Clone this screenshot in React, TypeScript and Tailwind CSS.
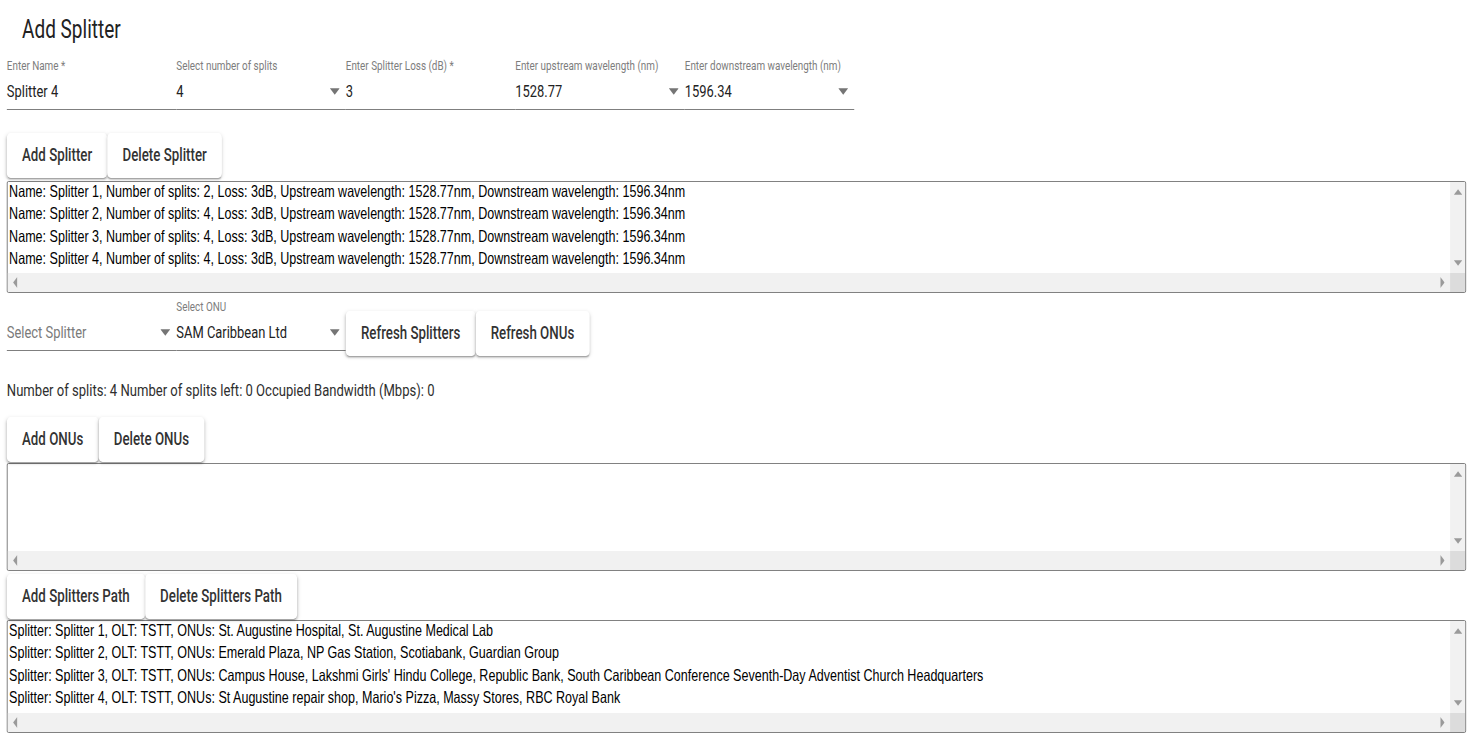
import React from "react";

const roboto = "font-['Roboto',sans-serif]";

const splitterLines = [
  "Name: Splitter 1, Number of splits: 2, Loss: 3dB, Upstream wavelength: 1528.77nm, Downstream wavelength: 1596.34nm",
  "Name: Splitter 2, Number of splits: 4, Loss: 3dB, Upstream wavelength: 1528.77nm, Downstream wavelength: 1596.34nm",
  "Name: Splitter 3, Number of splits: 4, Loss: 3dB, Upstream wavelength: 1528.77nm, Downstream wavelength: 1596.34nm",
  "Name: Splitter 4, Number of splits: 4, Loss: 3dB, Upstream wavelength: 1528.77nm, Downstream wavelength: 1596.34nm",
];

const pathLines = [
  "Splitter: Splitter 1, OLT: TSTT, ONUs: St. Augustine Hospital, St. Augustine Medical Lab",
  "Splitter: Splitter 2, OLT: TSTT, ONUs: Emerald Plaza, NP Gas Station, Scotiabank, Guardian Group",
  "Splitter: Splitter 3, OLT: TSTT, ONUs: Campus House, Lakshmi Girls' Hindu College, Republic Bank, South Caribbean Conference Seventh-Day Adventist Church Headquarters",
  "Splitter: Splitter 4, OLT: TSTT, ONUs: St Augustine repair shop, Mario's Pizza, Massy Stores, RBC Royal Bank",
];

const DropArrow = () => (
  <svg width="13" height="7" viewBox="0 0 10 5" className="shrink-0">
    <path d="M0 0l5 5 5-5z" fill="#757575" />
  </svg>
);

type FieldProps = {
  label?: string;
  value?: string;
  placeholder?: string;
  select?: boolean;
};

const Field = ({ label, value, placeholder, select }: FieldProps) => (
  <div className="flex w-[223px] shrink-0 flex-col">
    <div className="h-[16px] text-[13px] leading-[16px] text-[#7d7d7d]">
      {label}
    </div>
    <div className="flex h-[36px] items-center justify-between border-b border-[#7f7f7f] pr-[8px]">
      {value ? (
        <span className="text-[17px] text-[#222]">{value}</span>
      ) : (
        <span className="text-[17px] text-[#7a7a7a]">{placeholder}</span>
      )}
      {select && <DropArrow />}
    </div>
  </div>
);

const Btn = ({ children }: { children: React.ReactNode }) => (
  <button className="h-[45px] shrink-0 rounded-[5px] bg-white px-5 text-[17.5px] font-medium text-[#333] shadow-[0_3px_1px_-2px_rgba(0,0,0,0.2),0_2px_2px_0_rgba(0,0,0,0.14),0_1px_5px_0_rgba(0,0,0,0.12)]">
    {children}
  </button>
);

const Tri = ({ dir }: { dir: "up" | "down" | "left" | "right" }) => {
  const d = {
    up: "M0 5L5 0L10 5z",
    down: "M0 0L10 0L5 5z",
    left: "M5 0L5 10L0 5z",
    right: "M0 0L5 5L0 10z",
  }[dir];
  const vertical = dir === "up" || dir === "down";
  return (
    <svg
      width={vertical ? 11 : 6}
      height={vertical ? 6 : 11}
      viewBox={vertical ? "0 0 10 5" : "0 0 5 10"}
    >
      <path d={d} fill="#9a9a9a" />
    </svg>
  );
};

const TextBox = ({ lines, height }: { lines: string[]; height: string }) => (
  <div
    className={`flex w-full flex-col overflow-hidden rounded-[2px] border border-[#707070] ${height}`}
  >
    <div className="flex min-h-0 flex-1">
      <div className="min-w-0 flex-1 overflow-hidden whitespace-pre pl-[2px] font-['Liberation_Sans',Arial,sans-serif] text-[16.5px] leading-[22.4px] text-black">
        <div className="-mt-[2px]">
          {lines.map((l, i) => (
            <div key={i}>{l}</div>
          ))}
        </div>
      </div>
      <div className="flex w-[20px] flex-col items-center justify-between bg-[#f1f1f1] py-[7px]">
        <Tri dir="up" />
        <Tri dir="down" />
      </div>
    </div>
    <div className="flex h-[19px]">
      <div className="flex flex-1 items-center justify-between bg-[#f1f1f1] px-[7px]">
        <Tri dir="left" />
        <Tri dir="right" />
      </div>
      <div className="w-[20px] bg-[#dcdcdc]" />
    </div>
  </div>
);

export default function App() {
  return (
    <div className="h-[750px] w-full overflow-hidden bg-white">
      <div
        className={`w-[1941px] origin-top-left scale-x-[0.76] pl-[9px] pr-[12px] ${roboto}`}
      >
        <h1 className="ml-[20px] pt-[10px] text-[25px] font-normal leading-[40px] text-[#222]">
          Add Splitter
        </h1>

        <div className="mt-[8px] flex">
          <Field label="Enter Name *" value="Splitter 4" />
          <Field label="Select number of splits" value="4" select />
          <Field label="Enter Splitter Loss (dB) *" value="3" />
          <Field label="Enter upstream wavelength (nm)" value="1528.77" select />
          <Field label="Enter downstream wavelength (nm)" value="1596.34" select />
        </div>

        <div className="mt-[23px] flex">
          <Btn>Add Splitter</Btn>
          <Btn>Delete Splitter</Btn>
        </div>
        <div className="mt-[3px]">
          <TextBox lines={splitterLines} height="h-[112px]" />
        </div>

        <div className="mt-[6px] flex items-start">
          <Field placeholder="Select Splitter" select />
          <Field label="Select ONU" value="SAM Caribbean Ltd" select />
          <div className="mt-[12px] flex">
            <Btn>Refresh Splitters</Btn>
            <Btn>Refresh ONUs</Btn>
          </div>
        </div>

        <p className="mt-[22px] text-[17.2px] leading-[24px] text-[#2e2e2e]">
          Number of splits: 4 Number of splits left: 0 Occupied Bandwidth (Mbps): 0
        </p>

        <div className="mt-[15px] flex">
          <Btn>Add ONUs</Btn>
          <Btn>Delete ONUs</Btn>
        </div>
        <div className="mt-[1px]">
          <TextBox lines={[]} height="h-[108px]" />
        </div>

        <div className="mt-[3px] flex">
          <Btn>Add Splitters Path</Btn>
          <Btn>Delete Splitters Path</Btn>
        </div>
        <div className="mt-[1px]">
          <TextBox lines={pathLines} height="h-[113px]" />
        </div>
      </div>
    </div>
  );
}
